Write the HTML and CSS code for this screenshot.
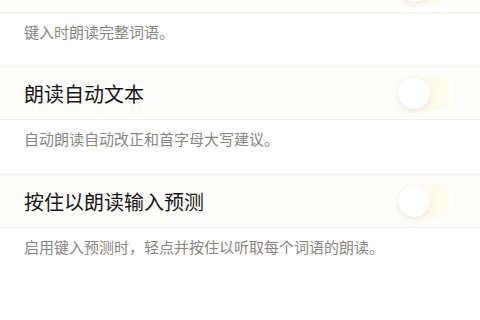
FILE: index.html
```html
<!DOCTYPE html>
<html lang="zh-CN">
<head>
  <meta charset="UTF-8" />
  <meta name="viewport" content="width=device-width, initial-scale=1" />
  <title>朗读</title>
  <link rel="stylesheet" href="styles.css">
</head>
<body>
  <div class="settings">
    <div class="group">
      <div class="cell">
        <span class="cell-title">朗读完整词语</span>
        <span class="switch"><span class="knob"></span></span>
      </div>
      <div class="footer first">键入时朗读完整词语。</div>
    </div>

    <div class="group">
      <div class="cell">
        <span class="cell-title">朗读自动文本</span>
        <span class="switch"><span class="knob"></span></span>
      </div>
      <div class="footer">自动朗读自动改正和首字母大写建议。</div>
    </div>

    <div class="group">
      <div class="cell">
        <span class="cell-title">按住以朗读输入预测</span>
        <span class="switch"><span class="knob"></span></span>
      </div>
      <div class="footer">启用键入预测时，轻点并按住以听取每个词语的朗读。</div>
    </div>
  </div>
</body>
</html>
```

FILE: styles.css
```css
* {
  box-sizing: border-box;
}
body {
  margin: 0;
  background: #ffffff;
  font-family: "Noto Sans CJK SC", "Noto Sans", sans-serif;
  overflow: hidden;
}
.settings {
  margin-top: -41px;
}

.cell {
  display: flex;
  align-items: center;
  justify-content: space-between;
  height: 54px;
  padding: 0 25px 0 24px;
  background: #fffefc;
  border-top: 1px solid #f1eee8;
  border-bottom: 1px solid #f1eee8;
}
.cell-title {
  font-size: 20px;
  color: #161514;
  line-height: 1;
  padding-top: 2px;
}

.switch {
  position: relative;
  width: 58px;
  height: 34px;
  border-radius: 17px;
  background: linear-gradient(90deg, #fffefa 0%, #fffbea 65%, #fffef8 100%);
}
.knob {
  position: absolute;
  top: 1px;
  left: 1px;
  width: 32px;
  height: 32px;
  border-radius: 50%;
  background: #ffffff;
  box-shadow: 0 3px 6px rgba(220, 190, 150, 0.3), 0 0 1px rgba(210, 190, 160, 0.35);
}

.footer {
  height: 54px;
  padding: 9px 24px 0;
  font-size: 15px;
  line-height: 20px;
  color: #8a8580;
}
.footer.first {
  height: 53px;
}
```
